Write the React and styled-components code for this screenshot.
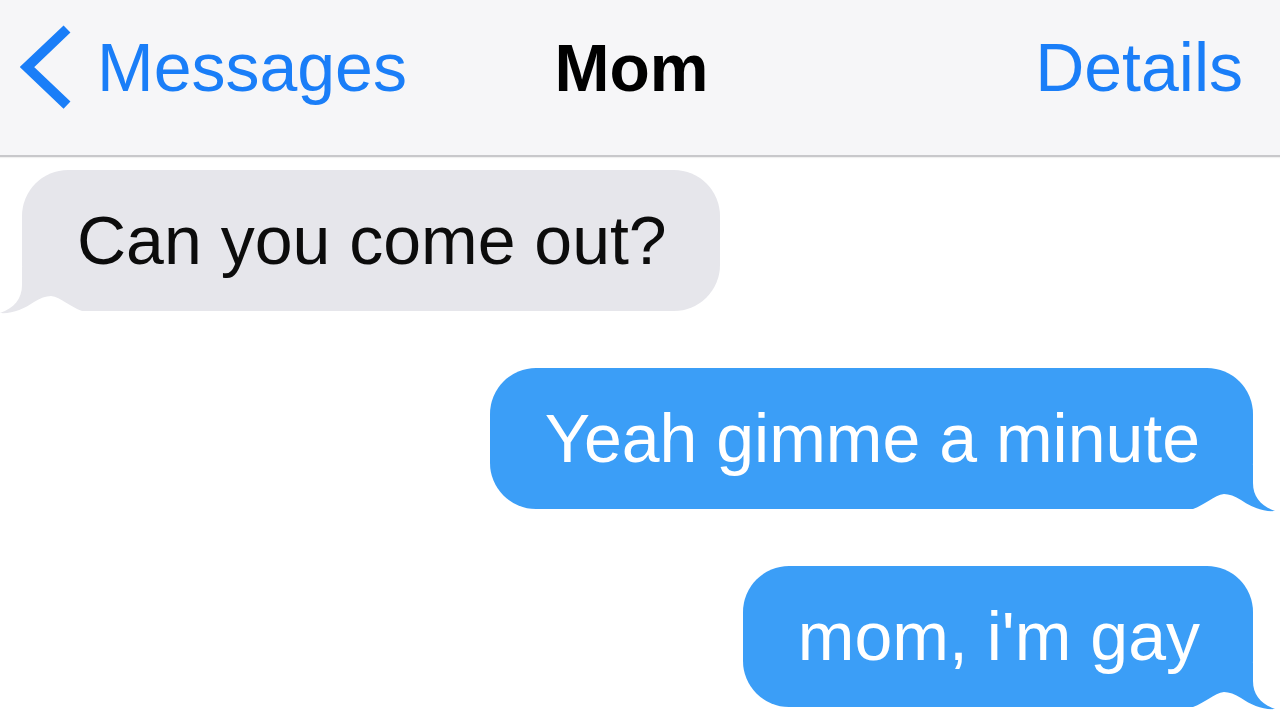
import React from "react";
import styled, { createGlobalStyle } from "styled-components";

const GlobalStyle = createGlobalStyle`
  html, body {
    margin: 0;
    padding: 0;
    background: #ffffff;
    overflow: hidden;
  }
  body {
    font-family: "Liberation Sans", Arial, sans-serif;
  }
`;

const Screen = styled.div`
  width: 1280px;
  height: 720px;
  overflow: hidden;
  background: #ffffff;
`;

const NavBar = styled.header`
  height: 157px;
  box-sizing: border-box;
  padding: 0 37px 21px 20px;
  background: #f6f6f8;
  border-bottom: 2px solid #c8c8cb;
  box-shadow: 0 1px 1px rgba(0, 0, 0, 0.06);
  display: grid;
  grid-template-columns: 1fr auto 1fr;
  align-items: center;
`;

const BackButton = styled.div`
  display: flex;
  align-items: center;
  gap: 25px;
`;

const NavLink = styled.span`
  font-size: 68px;
  line-height: 67px;
  color: #1a7ef8;
  justify-self: ${(p) => p.align || "start"};
`;

const Title = styled.span`
  font-size: 66px;
  line-height: 67px;
  font-weight: 700;
  color: #000000;
  margin-top: 3px;
`;

const Thread = styled.main`
  display: flex;
  flex-direction: column;
  gap: 57px;
  padding: 13px 27px 0 22px;
`;

const Bubble = styled.div`
  position: relative;
  align-self: ${(p) => (p.mine ? "flex-end" : "flex-start")};
  height: 141px;
  box-sizing: border-box;
  padding: 0 53px 0 55px;
  display: flex;
  align-items: center;
  border-radius: 46px;
  background: ${(p) => (p.mine ? "#3b9ef7" : "#e6e6eb")};
  color: ${(p) => (p.mine ? "#ffffff" : "#0c0c0c")};
`;

const BubbleText = styled.span`
  position: relative;
  z-index: 1;
  font-size: 68px;
  line-height: 67px;
  white-space: nowrap;
`;

const Tail = styled.svg`
  position: absolute;
  bottom: -6px;
  width: 90px;
  height: 50px;
  z-index: 0;
  ${(p) =>
    p.mine
      ? "right: -30px;"
      : "left: -30px; transform: scaleX(-1);"}
`;

const Chevron = () => (
  <svg width="52" height="88" viewBox="0 0 52 88">
    <polyline
      points="47,6 7,44 47,82"
      fill="none"
      stroke="#1a7ef8"
      strokeWidth="10"
      strokeLinecap="butt"
      strokeLinejoin="miter"
    />
  </svg>
);

const BubbleTail = ({ mine, color }) => (
  <Tail mine={mine} viewBox="0 0 90 50">
    <rect x="0" y="0" width="66" height="50" fill="#ffffff" />
    <path
      d="M0 0 L60 0 L60 18 C60 32 68 41 82 46 C70 47 58 42 48 35 C42 31 36 29 31 29 C21 30 12 40 0 44 Z"
      fill={color}
    />
  </Tail>
);

const messages = [
  { id: 1, text: "Can you come out?", mine: false },
  { id: 2, text: "Yeah gimme a minute", mine: true },
  { id: 3, text: "mom, i'm gay", mine: true },
];

const App = () => {
  return (
    <>
      <GlobalStyle />
      <Screen>
        <NavBar>
          <BackButton>
            <Chevron />
            <NavLink>Messages</NavLink>
          </BackButton>
          <Title>Mom</Title>
          <NavLink align="end">Details</NavLink>
        </NavBar>
        <Thread>
          {messages.map((m) => (
            <Bubble key={m.id} mine={m.mine}>
              <BubbleTail mine={m.mine} color={m.mine ? "#3b9ef7" : "#e6e6eb"} />
              <BubbleText>{m.text}</BubbleText>
            </Bubble>
          ))}
        </Thread>
      </Screen>
    </>
  );
};

export default App;
